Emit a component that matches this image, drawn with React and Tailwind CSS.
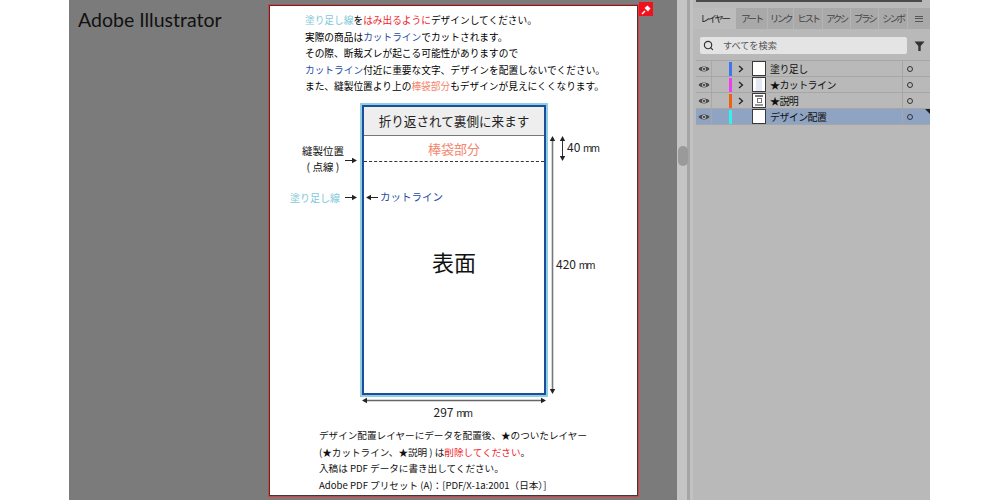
import { Search } from 'lucide-react';

const jp = { fontFamily: '"Noto Sans CJK JP", sans-serif' };

const tabs = [
  { label: 'アート', width: 'w-[32px]' },
  { label: 'リンク', width: 'w-[26px]' },
  { label: 'ヒスト', width: 'w-[29px]' },
  { label: 'アクシ', width: 'w-[28px]' },
  { label: 'ブラシ', width: 'w-[28px]' },
  { label: 'シンボ', width: 'w-[29px]' },
];

const layers = [
  { name: '塗り足し', bar: 'bg-[#3f76f0]', thumb: 'plain', arrow: true },
  { name: '★カットライン', bar: 'bg-[#f23cf0]', thumb: 'cut', arrow: true },
  { name: '★説明', bar: 'bg-[#f0600f]', thumb: 'text', arrow: true },
  { name: 'デザイン配置', bar: 'bg-[#35f0f0]', thumb: 'plain', arrow: false, selected: true },
];

function Eye() {
  return (
    <svg width="12" height="8" viewBox="0 0 12 8">
      <path d="M0.5 4 C2.5 0.8 9.5 0.8 11.5 4 C9.5 7.2 2.5 7.2 0.5 4 Z" fill="#4a4a4a" />
      <circle cx="6" cy="4" r="2" fill="#c8c8c8" />
      <circle cx="6" cy="4" r="1.1" fill="#333" />
    </svg>
  );
}

function Thumb({ kind }) {
  return (
    <div className="w-[14px] h-[15px] border border-[#3a3a3a] bg-white flex items-center justify-center overflow-hidden">
      {kind === 'cut' && <div className="w-[6px] h-[13px] bg-[#e3e8f4]" />}
      {kind === 'text' && (
        <div className="flex flex-col gap-[1px] items-center">
          <div className="w-[8px] h-[2px] bg-[#777]" />
          <div className="w-[5px] h-[5px] border border-[#777]" />
          <div className="w-[8px] h-[2px] bg-[#999]" />
        </div>
      )}
    </div>
  );
}

function LayerRow({ layer }) {
  return (
    <div className={`flex items-center h-[16px] border-b border-[#a6a6a6] ${layer.selected ? 'bg-[#8ea4c2]' : ''} relative`}>
      <div className="w-[16px] h-full flex items-center justify-center border-r border-[#a8a8a8]">
        <Eye />
      </div>
      <div className="w-[17px]" />
      <div className={`w-[3px] h-[14px] ${layer.bar}`} />
      <div className="w-[4px]" />
      <div className="w-[9px] flex justify-center">
        {layer.arrow && (
          <svg width="6" height="8" viewBox="0 0 6 8">
            <path d="M1 1 L4.5 4 L1 7" fill="none" stroke="#222" strokeWidth="1.3" />
          </svg>
        )}
      </div>
      <div className="w-[7px]" />
      <Thumb kind={layer.thumb} />
      <div className="ml-[4px] w-[132px] text-[10px] tracking-[-0.6px] leading-none text-[#111]" style={jp}>{layer.name}</div>
      <div className="w-[1px] h-full bg-[#a6a6a6]" />
      <div className="flex-1 flex justify-center pr-[14px]">
        <div className="w-[6px] h-[6px] rounded-full border border-[#333]" />
      </div>
      {layer.selected && (
        <div className="absolute top-0 right-0 w-0 h-0 border-t-[5px] border-t-[#222] border-l-[5px] border-l-transparent" />
      )}
    </div>
  );
}

function HArrow({ width, left = false }) {
  return (
    <svg width={width} height="7" viewBox={`0 0 ${width} 7`} className="block">
      <line x1={left ? 3 : 0} y1="3.5" x2={left ? width : width - 3} y2="3.5" stroke="#222" strokeWidth="1" />
      {left ? (
        <polygon points="0,3.5 5,0.8 5,6.2" fill="#222" />
      ) : (
        <polygon points={`${width},3.5 ${width - 5},0.8 ${width - 5},6.2`} fill="#222" />
      )}
    </svg>
  );
}

function VArrow({ height, color = '#333', stroke = 1 }) {
  return (
    <svg width="7" height={height} viewBox={`0 0 7 ${height}`} className="block">
      <line x1="3.5" y1="2" x2="3.5" y2={height - 2} stroke={color} strokeWidth={stroke} />
      <polygon points="3.5,0 0.8,5 6.2,5" fill="#222" />
      <polygon points={`3.5,${height} 0.8,${height - 5} 6.2,${height - 5}`} fill="#222" />
    </svg>
  );
}

function Mm({ value }) {
  return (
    <span>
      {value} <span className="text-[10px] tracking-[-1.6px]">mm</span>
    </span>
  );
}

function Diagram() {
  return (
    <div className="relative h-[302px] mt-[8px]">
      <div className="absolute left-[91px] top-0 w-[188px] h-[294px] border-2 border-[#8fd0de]">
        <div className="w-full h-full border-2 border-[#1c4ba0] bg-white flex flex-col">
          <div className="h-[29px] shrink-0 bg-[#eeeeee] border-b border-[#777] flex items-center justify-center text-[12.6px] text-[#222]" style={jp}>
            折り返されて裏側に来ます
          </div>
          <div className="h-[25px] shrink-0 flex items-center justify-center text-[13px] text-[#f5846c]" style={jp}>
            棒袋部分
          </div>
          <div className="border-t border-dashed border-[#333]" />
          <div className="flex-1 flex items-center justify-center pb-[31px] text-[22px] text-[#111]" style={jp}>
            表面
          </div>
        </div>
      </div>

      <div className="absolute left-[19px] top-[40px] w-[70px] text-center text-[10.5px] leading-[16px] text-[#111]" style={jp}>
        <div>縫製位置</div>
        <div>( 点線 )</div>
      </div>
      <div className="absolute left-[76px] top-[54px]"><HArrow width={12} /></div>
      <div className="absolute left-[21px] top-[88px] text-[10px] leading-[14px] text-[#7cc8d8]" style={jp}>塗り足し線</div>
      <div className="absolute left-[76px] top-[91px]"><HArrow width={12} /></div>
      <div className="absolute left-[97px] top-[91px]"><HArrow width={12} left /></div>
      <div className="absolute left-[111px] top-[87px] text-[10.5px] leading-[14px] text-[#1f4ba8]" style={jp}>カットライン</div>

      <div className="absolute left-[280px] top-[33px]"><VArrow height={258} color="#777" stroke={1.6} /></div>
      <div className="absolute left-[290px] top-[33px]"><VArrow height={25} /></div>
      <div className="absolute left-[298px] top-[36px] text-[12px] leading-[16px] text-[#222]" style={jp}><Mm value="40" /></div>
      <div className="absolute left-[286px] top-[153px] px-[1px] text-[12px] leading-[16px] text-[#222]" style={jp}><Mm value="420" /></div>

      <div className="absolute left-[93px] top-[294px]">
        <svg width="184" height="7" viewBox="0 0 184 7" className="block">
          <line x1="2" y1="3.5" x2="182" y2="3.5" stroke="#666" strokeWidth="1.4" />
          <polygon points="0,3.5 5,0.8 5,6.2" fill="#222" />
          <polygon points="184,3.5 179,0.8 179,6.2" fill="#222" />
        </svg>
      </div>
    </div>
  );
}

export default function App() {
  return (
    <div className="w-[1000px] h-[500px] bg-white flex overflow-hidden" style={jp}>
      <div className="w-[69px] shrink-0" />

      {/* canvas */}
      <div className="w-[608px] shrink-0 bg-[#7b7b7b] flex">
        <div className="w-[199px] shrink-0 pl-[9px] pt-[7px] text-[19.5px] leading-[26px] text-[#111]" style={{ fontFamily: 'Lato, sans-serif' }}>
          Adobe Illustrator
        </div>
        <div className="relative mt-[4px] w-[371px] h-[493px] shrink-0 bg-white border border-[#e33a3a] outline-1 outline-[#3a3a3a] -outline-offset-2">
          <div className="pl-[36px] pt-[7px] text-[9.7px] leading-[16.6px] text-black">
            <div><span className="text-[#7cc8d8]">塗り足し線</span>を<span className="text-[#f01c2c]">はみ出るように</span>デザインしてください。</div>
            <div>実際の商品は<span className="text-[#1f4ba8]">カットライン</span>でカットされます。</div>
            <div>その際、断裁ズレが起こる可能性がありますので</div>
            <div><span className="text-[#1f4ba8]">カットライン</span>付近に重要な文字、デザインを配置しないでください。</div>
            <div>また、縫製位置より上の<span className="text-[#f5846c]">棒袋部分</span>もデザインが見えにくくなります。</div>
          </div>
          <Diagram />
          <div className="text-center text-[12px] leading-[14px] text-[#222] pr-[2px]"><Mm value="297" /></div>
          <div className="pl-[50px] pt-[7px] text-[9.6px] leading-[16.6px] text-[#111]">
            <div>デザイン配置レイヤーにデータを配置後、★のついたレイヤー</div>
            <div>(★カットライン、★説明 ) は<span className="text-[#f01c2c]">削除してください</span>。</div>
            <div>入稿は PDF データに書き出してください。</div>
            <div>Adobe PDF プリセット (A)：[PDF/X-1a:2001（日本）]</div>
          </div>
          <div className="absolute -top-[3px] -right-[15px] w-[14px] h-[14px] bg-[#f0101e] flex items-center justify-center">
            <svg width="11" height="11" viewBox="0 0 11 11">
              <path d="M1 10 L4 7" fill="none" stroke="#fff" strokeWidth="1.4" />
              <path d="M6.5 1.5 L9.5 4.5 L7 7.5 L3.5 4 Z" fill="#fff" />
            </svg>
          </div>
        </div>
      </div>

      {/* scrollbar strip */}
      <div className="w-[13px] shrink-0 bg-[#c4c4c4] border-r-[3px] border-[#a5a5a5] pt-[146px]">
        <div className="ml-[1px] w-[10px] h-[20px] rounded-full bg-[#9a9a9a]" />
      </div>

      {/* layers panel */}
      <div className="w-[240px] shrink-0 bg-[#b9b9b9] border-l-[3px] border-[#c2c2c2]">
        <div className="h-[2px] ml-[3px] mr-[8px] bg-[#4a4a4a]" />
        <div className="flex items-end h-[26px] mt-[1px] pt-[5px]">
          <div className="w-[43px] h-full bg-[#bcbcbc] flex items-center justify-center text-[9.5px] tracking-[-2.3px] text-[#222]">レイヤー</div>
          <div className="flex flex-1 h-full bg-[#a9a9a9]">
            {tabs.map((tab) => (
              <div key={tab.label} className={`${tab.width} h-full overflow-hidden whitespace-nowrap flex items-center justify-center text-[9.5px] tracking-[-2.3px] text-[#444] border-r border-[#b4b4b4]`}>
                {tab.label}
              </div>
            ))}
            <div className="flex-1 h-full flex flex-col items-center justify-center gap-[1.5px]">
              <div className="w-[8px] h-[1px] bg-[#555]" />
              <div className="w-[8px] h-[1px] bg-[#555]" />
              <div className="w-[8px] h-[1px] bg-[#555]" />
            </div>
          </div>
        </div>
        <div className="flex items-center h-[31px] pl-[7px] pt-[2px]">
          <div className="w-[207px] h-[17px] bg-[#e4e4e4] rounded-[2px] flex items-center pl-[3px] text-[9.2px] text-[#555]">
            <Search size={11} strokeWidth={2.5} className="text-[#333]" />
            <span className="ml-[9px]">すべてを検索</span>
          </div>
          <svg width="11" height="12" viewBox="0 0 12 12" className="ml-[7px]">
            <path d="M0.5 1 H11.5 L7.3 6 V11.5 H4.7 V6 Z" fill="#333" />
          </svg>
        </div>
        <div className="border-t border-[#a6a6a6] ml-[3px]">
          {layers.map((layer) => (
            <LayerRow key={layer.name} layer={layer} />
          ))}
        </div>
      </div>

      <div className="flex-1" />
    </div>
  );
}
